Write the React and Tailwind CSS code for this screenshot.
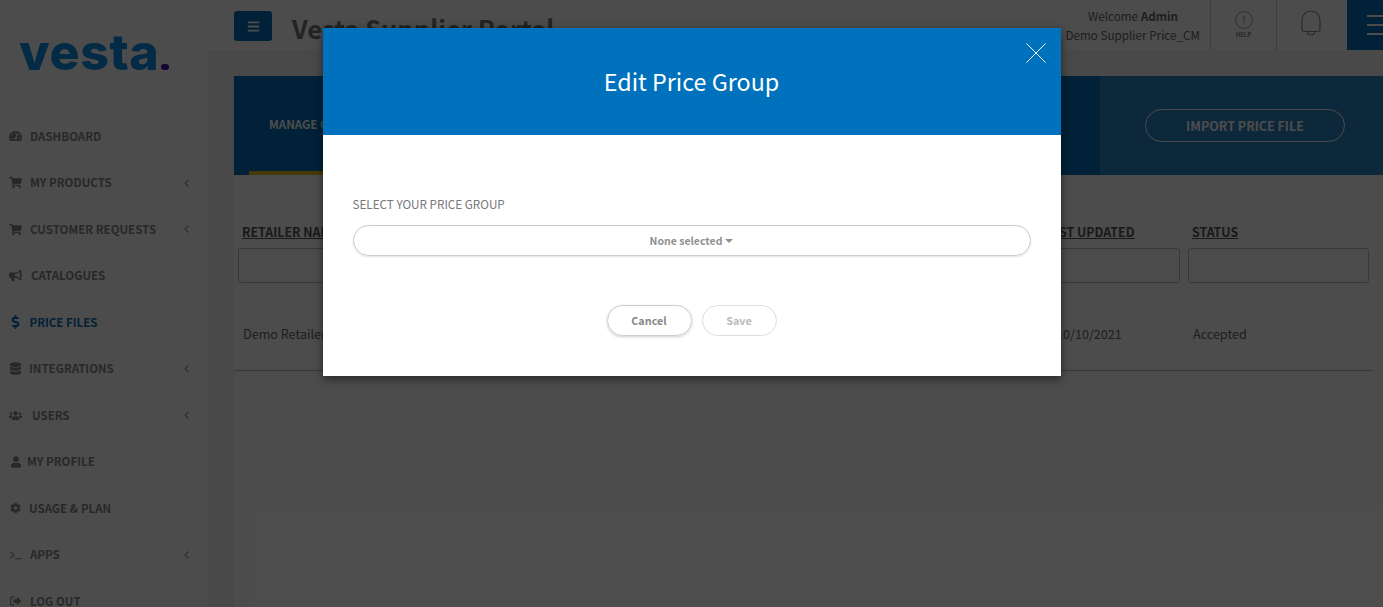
import React from "react";
import { FaTachometerAlt, FaShoppingCart, FaBullhorn, FaDollarSign, FaDatabase, FaUsers, FaUser, FaCog, FaBars } from "react-icons/fa";

const font = { fontFamily: '"Noto Sans CJK SC", "Noto Sans", sans-serif' };

function Prompt({ className }) {
  return (
    <svg viewBox="0 0 13 10" className={className} fill="none" stroke="currentColor" strokeWidth="1.1">
      <path d="M0.5 1.5 L4.5 5 L0.5 8.5" />
      <path d="M5.5 9 H12.5" />
    </svg>
  );
}

function Logout({ className }) {
  return (
    <svg viewBox="0 0 12 10" className={className} fill="currentColor">
      <path d="M4 0.5 H2 A2 2 0 0 0 0 2.5 V7.5 A2 2 0 0 0 2 9.5 H4 V8.3 H2 A0.8 0.8 0 0 1 1.2 7.5 V2.5 A0.8 0.8 0 0 1 2 1.7 H4 Z" />
      <path d="M7 0.7 L11.5 5 L7 9.3 V6.8 H3.5 V3.2 H7 Z" />
    </svg>
  );
}

function Chevron() {
  return (
    <svg viewBox="0 0 5 8" className="ml-auto w-[5px] h-[8px] text-[#999999]" fill="none" stroke="currentColor" strokeWidth="1.2">
      <path d="M4.4 0.5 L1 4 L4.4 7.5" />
    </svg>
  );
}

const items = [
  { label: "DASHBOARD", icon: <FaTachometerAlt className="w-[14px] h-[14px]" />, gap: "ml-[8px]" },
  { label: "MY PRODUCTS", icon: <FaShoppingCart className="w-[13px] h-[13px]" />, gap: "ml-[8px]", arrow: true },
  { label: "CUSTOMER REQUESTS", icon: <FaShoppingCart className="w-[13px] h-[13px]" />, gap: "ml-[8px]", arrow: true },
  { label: "CATALOGUES", icon: <FaBullhorn className="w-[13px] h-[13px]" />, gap: "ml-[9px]" },
  { label: "PRICE FILES", icon: <FaDollarSign className="w-[14px] h-[14px]" />, gap: "ml-[7.5px]", active: true },
  { label: "INTEGRATIONS", icon: <FaDatabase className="w-[11px] h-[13px]" />, gap: "ml-[7px]", arrow: true },
  { label: "USERS", icon: <FaUsers className="w-[15px] h-[15px]" />, gap: "ml-[10px]", arrow: true },
  { label: "MY PROFILE", icon: <FaUser className="w-[10px] h-[12px]" />, gap: "ml-[5px]" },
  { label: "USAGE & PLAN", icon: <FaCog className="w-[11px] h-[12px]" />, gap: "ml-[7px]" },
  { label: "APPS", icon: <Prompt className="w-[12px] h-[10px]" />, gap: "ml-[8px]", arrow: true },
  { label: "LOG OUT", icon: <Logout className="w-[12px] h-[10px]" />, gap: "ml-[8px]" },
];

function Sidebar() {
  return (
    <aside className="w-[208px] shrink-0 bg-[#ffffff] shadow-[2px_0_6px_rgba(0,0,0,0.08)] flex flex-col">
      <div className="h-[113px] shrink-0 pl-[19px] pt-[24px] flex items-start">
        <span className="text-[#0a90e8] text-[50px] leading-[56px] font-extrabold tracking-[0.6px] flex items-baseline" style={{ fontFamily: "Inter, sans-serif" }}>
          vesta
          <span className="w-[8px] h-[6px] rounded-full bg-[#4b0fa8] ml-[2px]" />
        </span>
      </div>
      <nav className="flex flex-col shrink-0">
        {items.map((it) => (
          <div key={it.label} className={`h-[46.5px] shrink-0 flex items-center pl-[9px] pr-[19px] text-[11.5px] font-semibold ${it.active ? "text-[#0a71bc]" : "text-[#888888]"}`}>
            <span className="w-[13px] flex justify-center shrink-0">{it.icon}</span>
            <span className={it.gap}>{it.label}</span>
            {it.arrow && <Chevron />}
          </div>
        ))}
      </nav>
    </aside>
  );
}

function Header() {
  return (
    <header className="h-[50px] bg-white flex items-stretch shrink-0">
      <div className="pl-[26px] pt-[11px]">
        <div className="w-[38px] h-[30px] rounded-[3px] bg-[#0071bc] flex items-center justify-center text-white">
          <FaBars className="w-[13px] h-[13px]" />
        </div>
      </div>
      <div className="ml-[20px] pt-[8px] text-[25.5px] leading-[40px] font-bold text-[#777777] whitespace-nowrap">Vesta Supplier Portal</div>
      <div className="ml-auto flex items-stretch">
        <div className="w-[150px] flex flex-col items-end pr-[10px] pt-[6px] text-[11.7px] leading-[19px] text-[#666666] whitespace-nowrap">
          <div className="pr-[22px]">Welcome <b>Admin</b></div>
          <div>Demo Supplier Price_CM</div>
        </div>
        <div className="w-[66px] border-l border-[#cccccc] flex flex-col items-center pt-[11px] text-[#888888]">
          <svg viewBox="0 0 18 18" className="w-[18px] h-[18px]" fill="none" stroke="currentColor" strokeWidth="0.8">
            <circle cx="9" cy="9" r="8.4" />
            <path d="M9 4.5 V10.5 M9 12.3 V13.5" strokeWidth="1" />
          </svg>
          <span className="text-[6px] leading-[9px] font-semibold mt-[1px]">HELP</span>
        </div>
        <div className="w-[71px] border-l border-[#cccccc] flex justify-center pt-[10px] text-[#888888]">
          <svg viewBox="0 0 20 26" className="w-[20px] h-[26px] -ml-[3px]" fill="none" stroke="currentColor" strokeWidth="1.1">
            <path d="M1 20 V10 A9 9 0 0 1 19 10 V20 Q19 21.5 17 21.5 H3 Q1 21.5 1 20 Z" />
            <path d="M6.5 21.5 A3.5 3.5 0 0 0 13.5 21.5" />
          </svg>
        </div>
        <div className="w-[36px] bg-[#0071bc] flex flex-col justify-center gap-[7px] pl-[20px] overflow-hidden">
          <span className="block w-[16px] h-[2px] shrink-0 bg-white" />
          <span className="block w-[16px] h-[2px] shrink-0 bg-white" />
          <span className="block w-[16px] h-[2px] shrink-0 bg-white" />
        </div>
      </div>
    </header>
  );
}

function Main() {
  return (
    <main className="flex-1 min-w-0 flex flex-col">
      <Header />
      <div className="flex-1 bg-[#f6f6f6] pl-[26px] pt-[26px]">
        <div className="h-full bg-white">
          <div className="h-[99px] bg-[#0071bc] flex items-stretch">
            <div className="ml-[15px] w-[300px] border-b-[4px] border-[#f2c21a] flex items-center pl-[20px] pt-[2px] text-[11.5px] font-semibold text-white whitespace-nowrap">MANAGE CUSTOMERS</div>
            <div className="ml-auto w-[283px] bg-[#2c85c4] flex items-center pl-[45px]">
              <div className="w-[200px] h-[33px] pt-[1px] rounded-full border border-white flex items-center justify-center text-[12.5px] font-bold text-white whitespace-nowrap">IMPORT PRICE FILE</div>
            </div>
          </div>
          <div className="pt-[47px] pl-[4px] pr-[14px]">
            <div className="grid grid-cols-[1fr_180px_181px] gap-x-[8px]">
              <div className="pl-[4px] text-[12.4px] leading-[20px] font-bold underline text-[#555555]">RETAILER NAME</div>
              <div className="pl-[44px] text-[12.4px] leading-[20px] font-bold underline text-[#555555]">LAST UPDATED</div>
              <div className="pl-[4px] text-[12.4px] leading-[20px] font-bold underline text-[#555555]">STATUS</div>
              <div className="h-[35px] mt-[6px] rounded-[3px] border border-[#bbbbbb]" />
              <div className="h-[35px] mt-[6px] rounded-[3px] border border-[#bbbbbb]" />
              <div className="h-[35px] mt-[6px] rounded-[3px] border border-[#bbbbbb]" />
            </div>
          </div>
          <div className="mr-[10px] h-[88px] border-b border-[#bbbbbb] pl-[9px] pr-[4px] pt-[15px] flex items-center text-[12.6px] text-[#666666]">
            <div className="flex-1">Demo Retailer</div>
            <div className="w-[181px] shrink-0 pl-[45px]">10/10/2021</div>
            <div className="w-[177px] shrink-0 pl-[1px]">Accepted</div>
          </div>
        </div>
      </div>
    </main>
  );
}

function Modal() {
  return (
    <div className="absolute inset-0 bg-black/70 flex justify-center pt-[28px]">
      <div className="w-[738px] h-[348px] bg-white shadow-[0_3px_9px_rgba(0,0,0,0.5)]">
        <div className="relative h-[107px] bg-[#0071bc] flex items-center justify-center pb-[2px] text-white text-[23.3px] leading-[36px]">
          Edit Price Group
          <svg viewBox="0 0 20 20" className="absolute right-[15px] top-[15px] w-[20px] h-[20px]" fill="none" stroke="#ffffff" strokeWidth="1">
            <path d="M0.5 0.5 L19.5 19.5 M19.5 0.5 L0.5 19.5" />
          </svg>
        </div>
        <div className="px-[30px] pt-[60px]">
          <div className="text-[11.7px] leading-[17px] text-[#777777]">SELECT YOUR PRICE GROUP</div>
          <div className="mt-[13px] h-[31px] rounded-full border border-[#cccccc] shadow-[0_1px_2px_rgba(0,0,0,0.12)] flex items-center justify-center text-[10.5px] font-semibold text-[#8f8f8f]">
            None selected
            <svg viewBox="0 0 8 4" className="ml-[3px] w-[8px] h-[4px]" fill="currentColor">
              <path d="M0 0 H8 L4 4 Z" />
            </svg>
          </div>
          <div className="mt-[49px] flex justify-center gap-[10px]">
            <div className="w-[85px] h-[31px] rounded-full border border-[#cccccc] shadow-[0_1px_3px_rgba(0,0,0,0.2)] flex items-center justify-center text-[10.8px] font-semibold text-[#888888]">Cancel</div>
            <div className="w-[75px] h-[31px] rounded-full border border-[#dddddd] flex items-center justify-center text-[10.8px] font-semibold text-[#bbbbbb]">Save</div>
          </div>
        </div>
      </div>
    </div>
  );
}

export default function App() {
  return (
    <div className="relative h-screen overflow-hidden flex bg-white" style={font}>
      <Sidebar />
      <Main />
      <Modal />
    </div>
  );
}
